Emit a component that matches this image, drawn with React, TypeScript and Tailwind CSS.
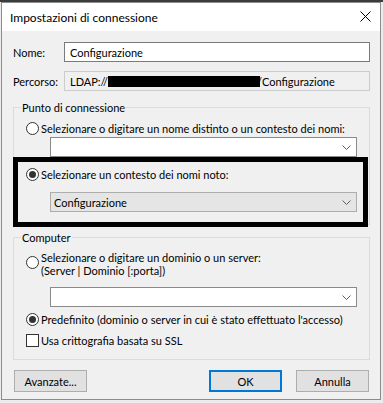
import React from "react";

function Chevron() {
  return (
    <svg width="9" height="5" viewBox="0 0 9 5" className="shrink-0">
      <polyline points="0.5,0.5 4.5,4.5 8.5,0.5" fill="none" stroke="#606060" strokeWidth="1" />
    </svg>
  );
}

function Radio({ checked }: { checked?: boolean }) {
  return (
    <span className="w-[13px] h-[13px] rounded-full border border-[#333333] bg-white flex items-center justify-center shrink-0">
      {checked && <span className="w-[7px] h-[7px] rounded-full bg-[#333333]" />}
    </span>
  );
}

function Combo({ gray, text }: { gray?: boolean; text?: string }) {
  return (
    <div
      className={
        gray
          ? "ml-[24px] w-[307px] h-[20px] border border-[#adadad] bg-[#e5e5e5] flex items-center pl-[3px] pr-[5px]"
          : "ml-[24px] w-[307px] h-[20px] border border-[#8a8a8a] bg-white flex items-center pl-[3px] pr-[5px]"
      }
    >
      <span className="flex-1 whitespace-nowrap">{text}</span>
      <Chevron />
    </div>
  );
}

export default function App() {
  return (
    <div className="w-[383px] h-[403px] bg-[#ececec] overflow-hidden font-[Lato,sans-serif] text-[11px] leading-[13px] text-black">
      <div className="h-[2px] bg-[#3c3c3c]" />
      <div className="ml-[1px] w-[380px] h-[398px] border border-[#8c8c8c] flex flex-col">
        {/* title bar */}
        <div className="h-[28px] bg-white flex items-center pl-[8px] pr-[9px] shrink-0">
          <span className="flex-1 text-[12px] pt-[1px]">Impostazioni di connessione</span>
          <svg width="11" height="11" viewBox="0 0 11 11" className="mb-[2px]">
            <line x1="0.5" y1="0.5" x2="10.5" y2="10.5" stroke="#000" strokeWidth="1" />
            <line x1="10.5" y1="0.5" x2="0.5" y2="10.5" stroke="#000" strokeWidth="1" />
          </svg>
        </div>

        {/* body */}
        <div className="flex-1 bg-[#f0f0f0] pl-[11px] pr-[10px] pt-[11px] flex flex-col">
          <div className="flex items-center h-[20px]">
            <span className="w-[51px]">Nome:</span>
            <div className="flex-1 h-[20px] border border-[#7a7a7a] bg-white flex items-center pl-[5px]">
              Configurazione
            </div>
          </div>
          <div className="flex items-center h-[20px] mt-[9px]">
            <span className="w-[51px]">Percorso:</span>
            <div className="flex-1 h-[20px] border border-[#cccccc] bg-[#f0f0f0] flex items-center pl-[5px] whitespace-nowrap">
              <span>LDAP://</span>
              <span className="inline-block w-[152px] h-[11px] bg-black -mr-[3px]" />
              <span>/Configurazione</span>
            </div>
          </div>

          {/* Punto di connessione */}
          <div className="relative mt-[16px] border border-[#dcdcdc] pl-[12px] pt-[14px] pb-[12px]">
            <span className="absolute -top-[7px] left-[7px] bg-[#f0f0f0] px-[1px]">Punto di connessione</span>
            <div className="flex items-center gap-[2px]">
              <Radio />
              <span className="whitespace-nowrap">Selezionare o digitare un nome distinto o un contesto dei nomi:</span>
            </div>
            <div className="mt-[2px]">
              <Combo />
            </div>
            <div className="flex items-center gap-[2px] mt-[11px]">
              <Radio checked />
              <span className="whitespace-nowrap">Selezionare un contesto dei nomi noto:</span>
            </div>
            <div className="mt-[11px]">
              <Combo gray text="Configurazione" />
            </div>
            <div className="absolute -left-[1px] top-[49px] w-[355px] h-[70px] border-[5px] border-black pointer-events-none" />
          </div>

          {/* Computer */}
          <div className="relative mt-[12px] border border-[#dcdcdc] pl-[12px] pt-[13px] pb-[12px]">
            <span className="absolute -top-[7px] left-[7px] bg-[#f0f0f0] px-[1px]">Computer</span>
            <div className="flex items-start gap-[2px]">
              <span className="mt-[5px]">
                <Radio />
              </span>
              <div className="flex flex-col whitespace-nowrap">
                <span>Selezionare o digitare un dominio o un server:</span>
                <span>(Server | Dominio [:porta])</span>
              </div>
            </div>
            <div className="mt-[10px]">
              <Combo />
            </div>
            <div className="flex items-center gap-[2px] mt-[6px]">
              <Radio checked />
              <span className="whitespace-nowrap">Predefinito (dominio o server in cui è stato effettuato l'accesso)</span>
            </div>
            <div className="flex items-center gap-[2px] mt-[8px]">
              <span className="w-[13px] h-[13px] border border-[#333333] bg-white shrink-0" />
              <span className="whitespace-nowrap">Usa crittografia basata su SSL</span>
            </div>
          </div>

          {/* buttons */}
          <div className="flex mt-[10px]">
            <button className="ml-[1px] w-[73px] h-[22px] border border-[#adadad] bg-[#e1e1e1] flex items-center justify-center">
              Avanzate...
            </button>
            <button className="ml-auto w-[73px] h-[22px] border-2 border-[#0078d7] bg-[#e1e1e1] flex items-center justify-center">
              OK
            </button>
            <button className="ml-[14px] mr-[1px] w-[73px] h-[22px] border border-[#adadad] bg-[#e1e1e1] flex items-center justify-center">
              Annulla
            </button>
          </div>
        </div>
      </div>
    </div>
  );
}
